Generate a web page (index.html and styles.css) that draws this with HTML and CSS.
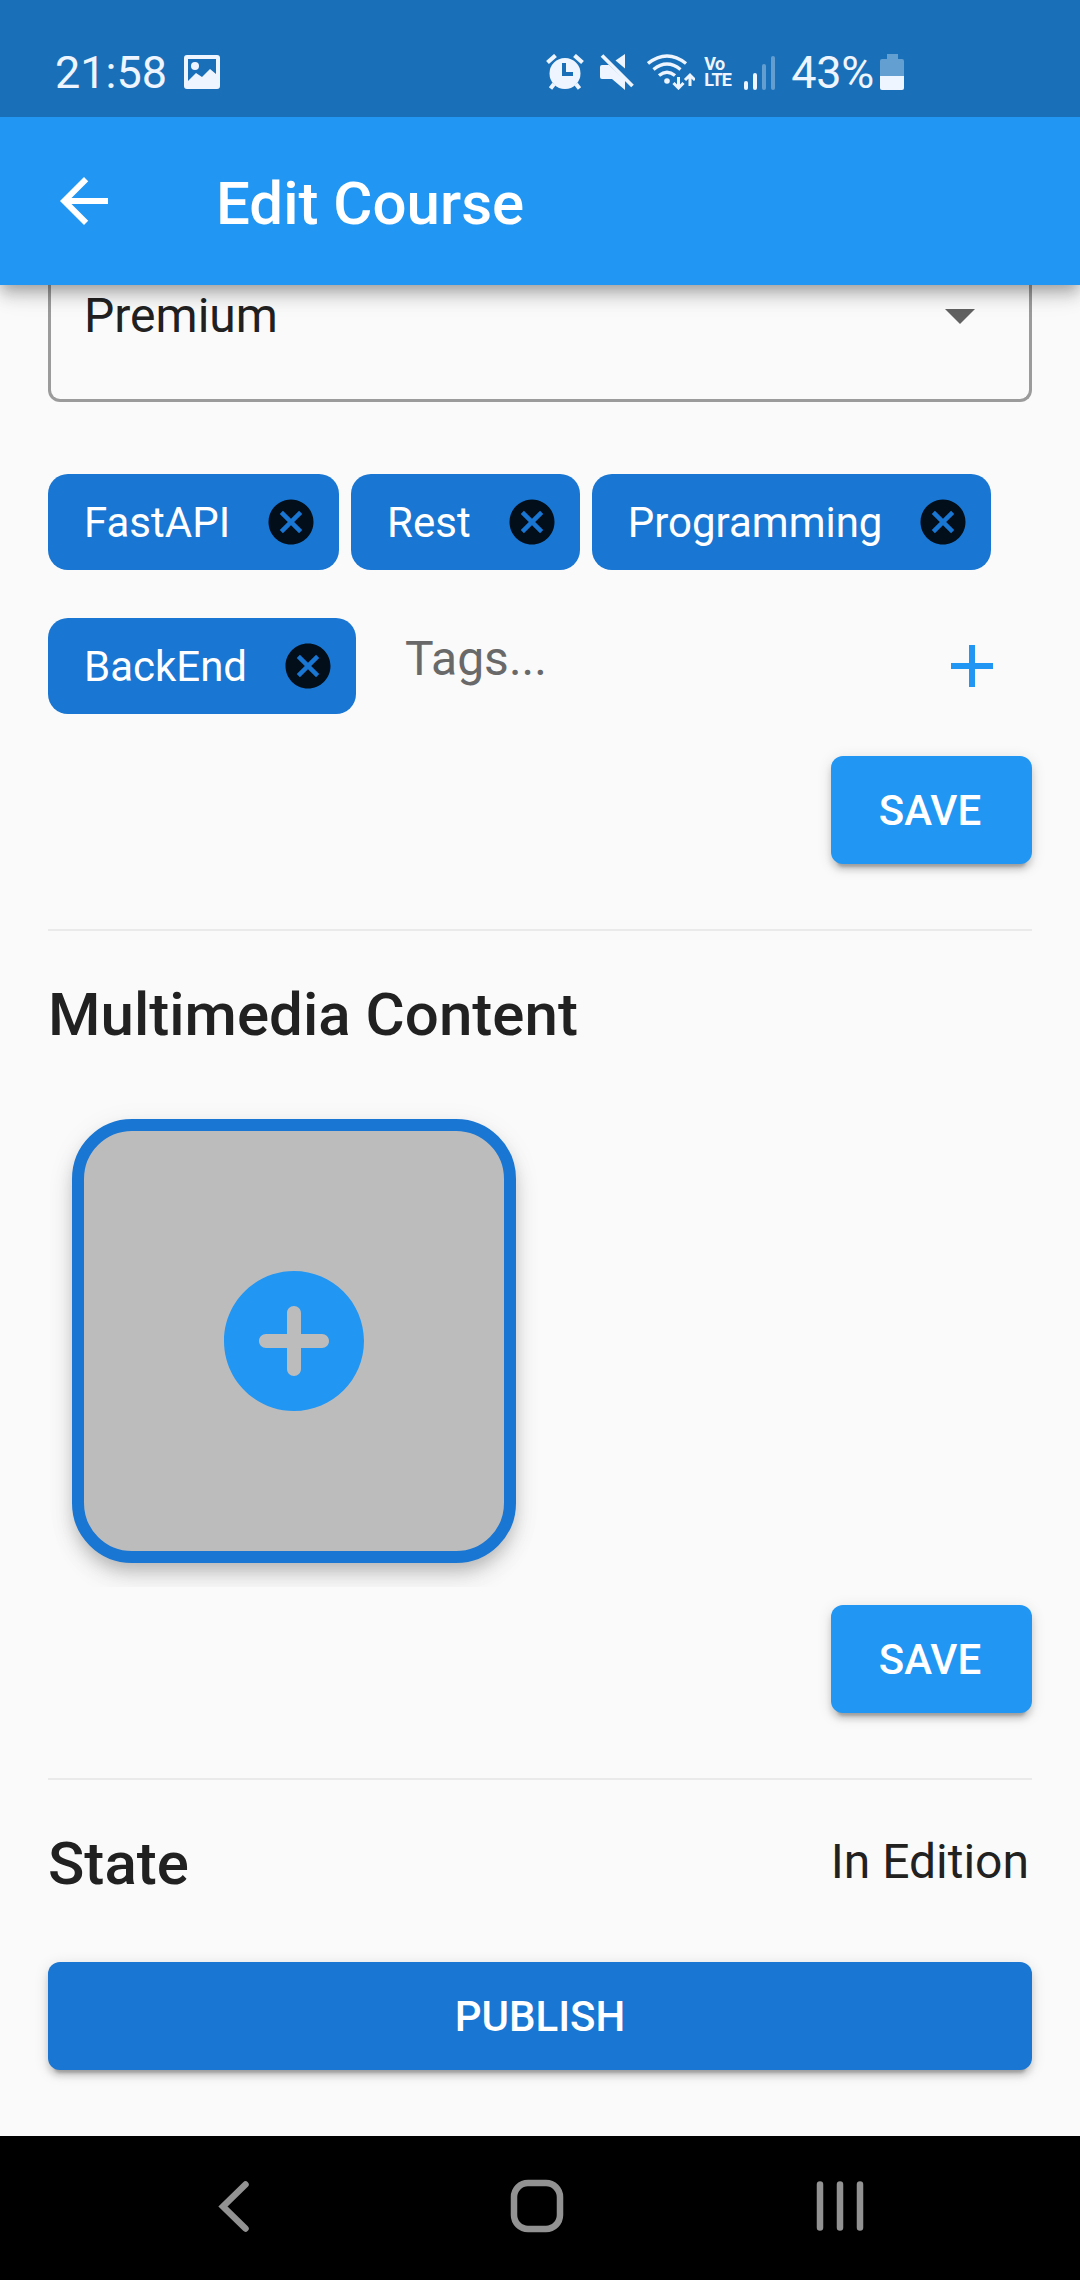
FILE: index.html
```html
<!DOCTYPE html>
<html lang="en">
<head>
<meta charset="utf-8">
<title>Edit Course</title>
<link rel="stylesheet" href="styles.css">
</head>
<body>
<div class="screen">
  <header class="status-bar">
    <span class="status-text clock">21:58</span>
    <svg class="icon-photo" width="36" height="34" viewBox="0 0 36 34"><path fill-rule="evenodd" d="M3 0h30q3 0 3 3v28q0 3-3 3H3q-3 0-3-3V3q0-3 3-3zM4 4v22l8-8 6 4 8-8 6 5V4z"/><circle cx="11" cy="11" r="4"/></svg>
    <svg class="icon-alarm" width="38" height="36" viewBox="0 0 38 36"><path d="M1.500 8.500l8-7M36.500 8.500l-8-7M8 30l-3.500 4.500M30 30l3.500 4.500" fill="none" stroke="currentColor" stroke-width="4.200"/><path fill-rule="evenodd" d="M19 4a15.500 15.500 0 1 0 0 31 15.500 15.500 0 0 0 0-31zM16 9h4v9h7v4H16z"/></svg>
    <svg class="icon-mute" width="34" height="36" viewBox="0 0 34 36"><path d="M15.500 6.500L25 0v14.500zM2 11h7l16 15v10L12 25H2q-2 0-2-2V13q0-2 2-2z"/><path d="M2 1.500L32.500 32" fill="none" stroke="currentColor" stroke-width="3.800"/></svg>
    <svg class="icon-wifi" width="48" height="36" viewBox="0 0 48 36"><g fill="none" stroke="currentColor" stroke-width="3.400"><path d="M1 9.500q19-15 38 0M6.500 15.500q13.500-11 27 0M12 21.500q8-6.500 16 0"/><path d="M31.500 23v10M26.500 29l5 5 5-5M43 32V21.500M38 26l5-5 5 5" stroke-width="3"/></g><circle cx="20" cy="27" r="2.800"/></svg>
    <span class="volte"><span>Vo</span><span>LTE</span></span>
    <svg class="icon-signal" width="32" height="36" viewBox="0 0 32 36"><rect y="27" width="4" height="9" rx="2"/><rect x="9" y="19" width="4" height="17" rx="2"/><g opacity=".35"><rect x="18" y="10" width="4" height="26" rx="2"/><rect x="27" y="2" width="4" height="34" rx="2"/></g></svg>
    <span class="status-text percent">43%</span>
    <svg class="icon-battery" width="24" height="36" viewBox="0 0 24 36"><path opacity=".35" d="M7 0h11v5h4q2 0 2 2v15H0V7q0-2 2-2h5z"/><path d="M0 22h24v12q0 2-2 2H2q-2 0-2-2z"/></svg>
  </header>
  <div class="app-bar">
    <svg class="back" width="72" height="72" viewBox="0 0 24 24"><path d="M20 11H7.830l5.590-5.590L12 4l-8 8 8 8 1.410-1.410L7.830 13H20v-2z"/></svg>
    <h1 class="title">Edit Course</h1>
  </div>
  <main class="content">
    <div class="select">
      <span>Premium</span>
      <svg width="72" height="72" viewBox="0 0 24 24"><path d="M7 10l5 5 5-5z"/></svg>
    </div>
    <div class="tags">
      <div class="chip"><span>FastAPI</span><svg width="54" height="54" viewBox="0 0 24 24"><use href="#cancel"/></svg></div>
      <div class="chip"><span>Rest</span><svg width="54" height="54" viewBox="0 0 24 24"><use href="#cancel"/></svg></div>
      <div class="chip"><span>Programming</span><svg width="54" height="54" viewBox="0 0 24 24"><use href="#cancel"/></svg></div>
      <div class="chip"><span>BackEnd</span><svg width="54" height="54" viewBox="0 0 24 24"><path id="cancel" d="M12 2C6.470 2 2 6.470 2 12s4.470 10 10 10 10-4.470 10-10S17.530 2 12 2zm5 13.590L15.590 17 12 13.410 8.410 17 7 15.590 10.590 12 7 8.410 8.410 7 12 10.590 15.590 7 17 8.410 13.410 12 17 15.590z"/></svg></div>
      <div class="tag-field"><span class="placeholder">Tags...</span><svg width="72" height="72" viewBox="0 0 24 24"><path d="M19 13h-6v6h-2v-6H5v-2h6V5h2v6h6v2z"/></svg></div>
    </div>
    <button class="button save tags-save">SAVE</button>
    <hr class="divider">
    <h2 class="heading">Multimedia Content</h2>
    <div class="media">
      <div class="media-card">
        <svg width="168" height="168" viewBox="0 0 24 24"><path d="M12 2C6.480 2 2 6.480 2 12s4.480 10 10 10 10-4.480 10-10S17.520 2 12 2zm4 11h-3v3c0 .550-.450 1-1 1s-1-.450-1-1v-3H8c-.550 0-1-.450-1-1s.450-1 1-1h3V8c0-.550.450-1 1-1s1 .450 1 1v3h3c.550 0 1 .450 1 1s-.450 1-1 1z"/></svg>
      </div>
    </div>
    <button class="button save media-save">SAVE</button>
    <hr class="divider">
    <div class="state">
      <h2 class="heading">State</h2>
      <span class="state-value">In Edition</span>
    </div>
    <button class="button publish">PUBLISH</button>
  </main>
  <nav class="nav-bar">
    <svg width="1080" height="144" viewBox="0 0 1080 144"><g fill="none" stroke="currentColor" stroke-linecap="round"><path d="M245.500 48.500L223 70.500l22.500 22" stroke-width="6.500"/><rect x="514" y="47" width="46" height="46" rx="14" stroke-width="6.500"/><path d="M820 48.500v43M840 48.500v43M860 48.500v43" stroke-width="6.500"/></g></svg>
  </nav>
</div>
</body>
</html>
```
FILE: styles.css
```css
* { box-sizing: border-box; }

body {
  margin: 0;
  font-family: Roboto, sans-serif;
  color: #212121;
  background: #fafafa;
}

h1, h2 { margin: 0; font-weight: 500; }

svg { display: block; flex: none; fill: currentColor; }

.screen {
  width: 1080px;
  height: 2280px;
  display: flex;
  flex-direction: column;
  overflow: hidden;
}

.status-bar {
  height: 117px;
  flex: none;
  display: flex;
  align-items: center;
  padding: 26px 176px 0 55px;
  background: #1a70b8;
  color: #eef5fe;
  position: relative;
  z-index: 2;
}

.status-text { font-size: 45px; line-height: 54px; padding-top: 2px; }
.icon-photo { margin-left: 17px; }
.icon-alarm { margin-left: auto; }
.icon-mute { margin-left: 16px; }
.icon-wifi { margin-left: 13px; }
.volte {
  margin-left: 9px;
  width: 29px;
  display: flex;
  flex-direction: column;
  font-size: 18px;
  font-weight: 700;
  line-height: 15.5px;
  letter-spacing: -.7px;
}
.icon-signal { margin-left: 11px; }
.percent { margin-left: 15px; letter-spacing: -.3px; }
.icon-battery { margin-left: 6px; }

.app-bar {
  height: 168px;
  flex: none;
  display: flex;
  align-items: center;
  padding-left: 48px;
  gap: 96px;
  background: #2196f3;
  color: #fff;
  position: relative;
  z-index: 1;
  box-shadow: 0 6px 12px -3px rgba(0, 0, 0, .2), 0 12px 15px rgba(0, 0, 0, .14), 0 3px 30px rgba(0, 0, 0, .12);
}

.title { font-size: 60px; line-height: 72px; padding-top: 6px; }

.content {
  flex: 1;
  display: flex;
  flex-direction: column;
  padding: 0 48px;
}

.select {
  height: 117px;
  display: flex;
  justify-content: space-between;
  align-items: center;
  padding: 0 33px 54px;
  border: 3px solid #9b9b9b;
  border-top: 0;
  border-radius: 0 0 12px 12px;
  font-size: 48px;
}
.select svg { color: #616161; }

.tags {
  margin-top: 72px;
  display: flex;
  flex-wrap: wrap;
  gap: 48px 12px;
}

.chip {
  height: 96px;
  display: flex;
  align-items: center;
  gap: 34px;
  padding: 0 21px 0 36px;
  border-radius: 20px;
  background: #1976d2;
  color: #fff;
  font-size: 42px;
}
.chip svg { color: #020e19; }

.tag-field {
  flex: 1;
  height: 96px;
  display: flex;
  align-items: center;
  justify-content: space-between;
  padding: 0 24px 0 37px;
  color: #696969;
  font-size: 48px;
}
.tag-field svg { color: #2196f3; }
.placeholder { padding-bottom: 15px; }

.button {
  height: 108px;
  flex: none;
  padding: 0;
  border: 0;
  border-radius: 12px;
  background: #2196f3;
  color: #fff;
  font: 500 42px Roboto, sans-serif;
  box-shadow: 0 9px 3px -6px rgba(0, 0, 0, .2), 0 6px 6px rgba(0, 0, 0, .14), 0 3px 15px rgba(0, 0, 0, .12);
}
.save { width: 201px; padding-right: 3px; align-self: flex-end; }
.tags-save { margin-top: 42px; }
.media-save { margin-top: 18px; }
.publish { margin-top: 62px; background: #1976d2; }

.divider {
  width: 100%;
  height: 2px;
  flex: none;
  margin: 65px 0 48px;
  border: 0;
  background: #eaeaea;
}

.heading { font-size: 60px; line-height: 72px; letter-spacing: .04px; }

/* Clips the card shadow at the bottom edge of the list */
.media {
  height: 492px;
  margin: 44px -48px 0;
  padding: 24px 72px;
  overflow: hidden;
}

.media-card {
  width: 444px;
  height: 444px;
  display: flex;
  align-items: center;
  justify-content: center;
  border: 12px solid #1976d2;
  border-radius: 60px;
  background: #bcbcbc;
  color: #2196f3;
  box-shadow: 0 9px 15px -3px rgba(0, 0, 0, .17), 0 15px 24px 0 rgba(0, 0, 0, .09), 0 6px 28px 2px rgba(0, 0, 0, .06);
}

.state { display: flex; justify-content: space-between; }
.state-value { padding-right: 3px; font-size: 48px; line-height: 68px; }

.nav-bar {
  height: 144px;
  flex: none;
  background: #000;
  color: #929292;
}
```
